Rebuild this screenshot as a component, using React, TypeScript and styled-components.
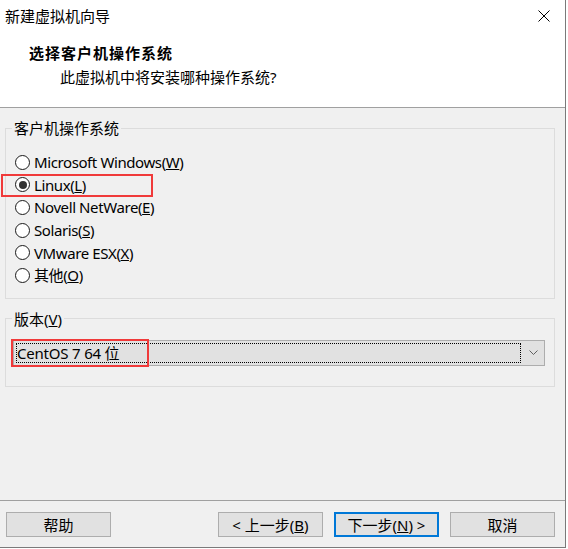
import React from "react";
import styled, { createGlobalStyle } from "styled-components";

const GlobalStyle = createGlobalStyle`
  html, body { margin: 0; padding: 0; background: #ffffff; }
  body {
    font-family: "Noto Sans", "Noto Sans CJK SC", sans-serif;
    font-size: 15px;
    color: #000;
  }
`;

const Window = styled.div`
  width: 566px;
  height: 548px;
  box-sizing: border-box;
  border-right: 1px solid #7a7a7a;
  border-bottom: 1px solid #7a7a7a;
  background: #f0f0f0;
  display: flex;
  flex-direction: column;
`;

const TitleBar = styled.div`
  height: 32px;
  box-sizing: border-box;
  background: #fff;
  display: flex;
  align-items: center;
  justify-content: space-between;
  padding: 0 15px 0 5px;
`;

const TitleText = styled.span`
  font-size: 15px;
  line-height: 20px;
`;

const Header = styled.div`
  height: 76px;
  box-sizing: border-box;
  background: #fff;
  border-bottom: 1px solid #a0a0a0;
  display: flex;
  flex-direction: column;
  padding: 11px 0 0 29px;
`;

const HeaderTitle = styled.div`
  font-weight: 700;
  line-height: 20px;
  letter-spacing: 1px;
`;

const HeaderSub = styled.div`
  line-height: 20px;
  margin: 4px 0 0 31px;
`;

const Group = styled.fieldset<{ $top: number }>`
  margin: ${(p) => p.$top}px 0 0 5px;
  width: 550px;
  box-sizing: border-box;
  border: 1px solid #dcdcdc;
  padding: 0;
  min-inline-size: 0;
`;

const Legend = styled.legend`
  margin-left: 6px;
  padding: 0 2px;
  line-height: 20px;
  font-size: 15px;
`;

const RadioList = styled.div`
  display: flex;
  flex-direction: column;
  padding: 13px 0 11.4px 9px;
`;

const RadioRow = styled.label`
  position: relative;
  height: 22.6px;
  display: flex;
  align-items: center;
  gap: 4px;
  line-height: 20px;
  letter-spacing: -0.4px;
`;

const RadioCircle = styled.span<{ $checked?: boolean }>`
  width: 15px;
  height: 15px;
  box-sizing: border-box;
  border-radius: 50%;
  border: 1px solid #1a1a1a;
  background: #fff;
  display: flex;
  align-items: center;
  justify-content: center;
  &::after {
    content: "";
    width: 8px;
    height: 8px;
    border-radius: 50%;
    background: ${(p) => (p.$checked ? "#333" : "transparent")};
  }
`;

const Highlight = styled.span<{ $l: number; $t: number; $w: number; $h: number }>`
  position: absolute;
  left: ${(p) => p.$l}px;
  top: ${(p) => p.$t}px;
  width: ${(p) => p.$w}px;
  height: ${(p) => p.$h}px;
  box-sizing: border-box;
  border: 2px solid #f03a3a;
  pointer-events: none;
`;

const ComboArea = styled.div`
  padding: 11px 9px 20px 7px;
`;

const Combo = styled.div`
  position: relative;
  height: 26px;
  box-sizing: border-box;
  border: 1px solid #adadad;
  background: #e1e1e1;
  display: flex;
`;

const FocusRect = styled.div`
  flex: 1;
  margin: 2px;
  border: 1px dotted #000;
  display: flex;
  align-items: center;
  padding-left: 0;
  line-height: 20px;
  letter-spacing: -0.2px;
`;

const ArrowBox = styled.div`
  width: 21px;
  display: flex;
  align-items: center;
  justify-content: center;
`;

const Footer = styled.div`
  margin-top: auto;
  border-top: 1px solid #a0a0a0;
  height: 47px;
  box-sizing: border-box;
  padding: 11px 10px 0 6px;
  display: flex;
  align-items: flex-start;
  gap: 11px;
`;

const Button = styled.button<{ $default?: boolean; $push?: boolean }>`
  width: 105px;
  height: 25px;
  box-sizing: border-box;
  border: ${(p) => (p.$default ? "2px solid #0078d7" : "1px solid #adadad")};
  background: #e1e1e1;
  font-family: "Noto Sans", "Noto Sans CJK SC", sans-serif;
  font-size: 15px;
  line-height: 20px;
  color: #000;
  padding: 0;
  margin-left: ${(p) => (p.$push ? "auto" : "0")};
  display: flex;
  align-items: center;
  justify-content: center;
`;

const CloseIcon = () => (
  <svg width="12" height="12" viewBox="0 0 12 12">
    <path d="M0.5 0.5 L11.5 11.5 M11.5 0.5 L0.5 11.5" stroke="#000" strokeWidth="1" fill="none" />
  </svg>
);

const Chevron = () => (
  <svg width="9" height="5" viewBox="0 0 9 5">
    <path d="M0.5 0.5 L4.5 4.5 L8.5 0.5" stroke="#606060" strokeWidth="1" fill="none" />
  </svg>
);

const osList: { label: string; key: string; checked?: boolean }[] = [
  { label: "Microsoft Windows", key: "W" },
  { label: "Linux", key: "L", checked: true },
  { label: "Novell NetWare", key: "E" },
  { label: "Solaris", key: "S" },
  { label: "VMware ESX", key: "X" },
  { label: "其他", key: "O" },
];

export default function App() {
  return (
    <>
      <GlobalStyle />
      <Window>
        <TitleBar>
          <TitleText>新建虚拟机向导</TitleText>
          <CloseIcon />
        </TitleBar>
        <Header>
          <HeaderTitle>选择客户机操作系统</HeaderTitle>
          <HeaderSub>此虚拟机中将安装哪种操作系统?</HeaderSub>
        </Header>

        <Group $top={10}>
          <Legend>客户机操作系统</Legend>
          <RadioList>
            {osList.map((os) => (
              <RadioRow key={os.key}>
                <RadioCircle $checked={os.checked} />
                <span>
                  {os.label}(<u>{os.key}</u>)
                </span>
                {os.checked && <Highlight $l={-14} $t={0} $w={152} $h={23} />}
              </RadioRow>
            ))}
          </RadioList>
        </Group>

        <Group $top={10}>
          <Legend>
            版本(<u>V</u>)
          </Legend>
          <ComboArea>
            <Combo>
              <FocusRect>CentOS 7 64 位</FocusRect>
              <ArrowBox>
                <Chevron />
              </ArrowBox>
              <Highlight $l={-3} $t={-2} $w={138} $h={28} />
            </Combo>
          </ComboArea>
        </Group>

        <Footer>
          <Button>帮助</Button>
          <Button $push>
            &lt; 上一步(<u>B</u>)
          </Button>
          <Button $default>
            下一步(<u>N</u>) &gt;
          </Button>
          <Button>取消</Button>
        </Footer>
      </Window>
    </>
  );
}
